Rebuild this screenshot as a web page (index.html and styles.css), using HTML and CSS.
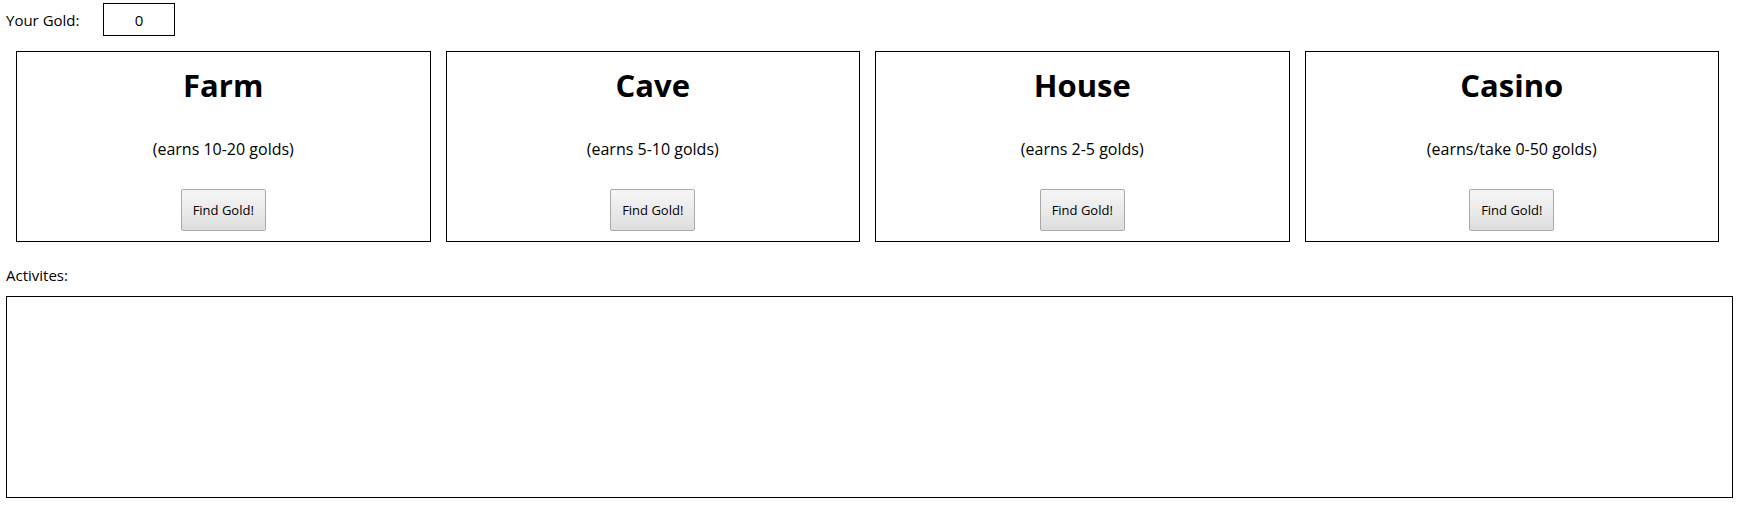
FILE: index.html
```html
<!DOCTYPE html>
<html>
<head>
<meta charset="utf-8">
<title>Gold</title>
<link rel="stylesheet" href="styles.css">
</head>
<body>
<div class="page">
  <div class="gold-row">
    <span class="gold-label">Your Gold:</span>
    <div class="gold-box">0</div>
  </div>
  <div class="places">
    <div class="place">
      <h2 class="place-title">Farm</h2>
      <p class="place-desc">(earns 10-20 golds)</p>
      <button class="find-btn">Find Gold!</button>
    </div>
    <div class="place">
      <h2 class="place-title">Cave</h2>
      <p class="place-desc">(earns 5-10 golds)</p>
      <button class="find-btn">Find Gold!</button>
    </div>
    <div class="place">
      <h2 class="place-title">House</h2>
      <p class="place-desc">(earns 2-5 golds)</p>
      <button class="find-btn">Find Gold!</button>
    </div>
    <div class="place">
      <h2 class="place-title">Casino</h2>
      <p class="place-desc">(earns/take 0-50 golds)</p>
      <button class="find-btn">Find Gold!</button>
    </div>
  </div>
  <div class="act-label">Activites:</div>
  <div class="activities"></div>
</div>
</body>
</html>
```
FILE: styles.css
```css
html, body {
  margin: 0;
  padding: 0;
  background: #fff;
}
body {
  font-family: "Open Sans", "DejaVu Sans", sans-serif;
  color: #000;
}
.page {
  padding: 3px 7px 0 6px;
}
.gold-row {
  display: flex;
  align-items: center;
  height: 33px;
}
.gold-label {
  font-size: 15px;
  width: 97px;
}
.gold-box {
  box-sizing: border-box;
  width: 72px;
  height: 33px;
  border: 1px solid #000;
  display: flex;
  align-items: center;
  justify-content: center;
  font-size: 15px;
}
.places {
  display: grid;
  grid-template-columns: repeat(4, 1fr);
  column-gap: 15px;
  margin: 15px 14px 0 10px;
}
.place {
  box-sizing: border-box;
  height: 191px;
  border: 1px solid #000;
  display: flex;
  flex-direction: column;
  align-items: center;
}
.place-title {
  margin: 13px 0 0;
  font-size: 31px;
  line-height: 40px;
  font-weight: 700;
}
.place-desc {
  margin: 33px 0 0;
  font-size: 16px;
  line-height: 22px;
}
.find-btn {
  margin-top: 29px;
  box-sizing: border-box;
  width: 85px;
  height: 42px;
  font-family: "Open Sans", "DejaVu Sans", sans-serif;
  font-size: 13px;
  color: #000;
  border: 1px solid #a9a9a9;
  border-radius: 2px;
  background: linear-gradient(#f6f6f6, #dedede);
  padding: 0;
}
.act-label {
  margin-top: 23px;
  font-size: 15px;
  line-height: 20px;
}
.activities {
  box-sizing: border-box;
  margin-top: 11px;
  height: 202px;
  border: 1px solid #000;
}
```
